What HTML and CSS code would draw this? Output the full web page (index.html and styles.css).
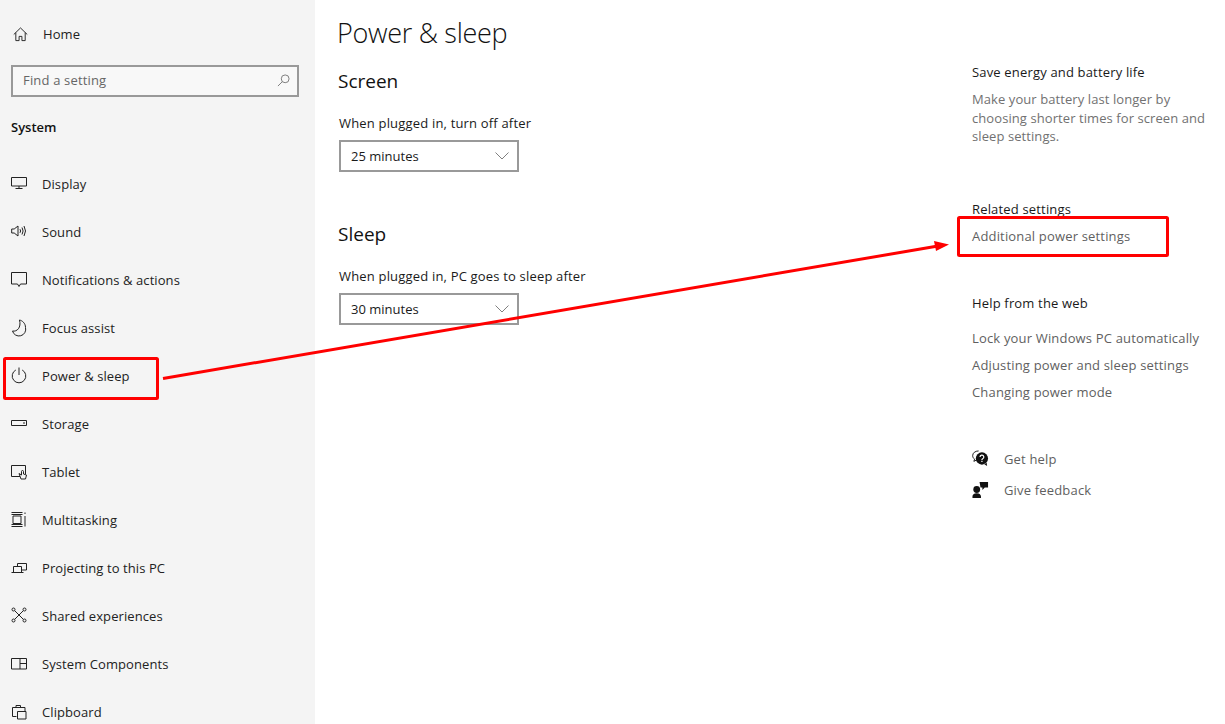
FILE: index.html
```html
<!DOCTYPE html>
<html>
<head>
<meta charset="utf-8">
<title>Power &amp; sleep</title>
<link rel="stylesheet" href="styles.css">
</head>
<body>

<div class="page">
	<nav class="sidebar">
		<div class="nav-item home">
			<svg class="icon" viewBox="0 0 16 16"><path d="M.8 8 8 1l7.2 7M3 6v8.500h3.500V10h3v4.500H13V6"/></svg>
			<span>Home</span>
		</div>
		<div class="search">
			<span>Find a setting</span>
			<svg class="search-icon" viewBox="0 0 14 14"><circle cx="8.800" cy="5.200" r="4.200"/><path d="M5.800 8.200 1 13"/></svg>
		</div>
		<div class="system">System</div>
		<ul class="nav-list">
			<li class="nav-item">
				<svg class="icon" viewBox="0 0 16 16"><path d="M.5 1.500h15v8.500H.5zM8 10v2.500M4.500 12.500h7"/></svg>
				<span>Display</span>
			</li>
			<li class="nav-item">
				<svg class="icon" viewBox="0 0 16 16"><path d="M.7 5v4h2.500L7 12V2L3.200 5zM9 5.200q1.200 1.800 0 3.600M11 3.500q2.200 3.500 0 7M13 2q3 5 0 10"/></svg>
				<span>Sound</span>
			</li>
			<li class="nav-item">
				<svg class="icon" viewBox="0 0 16 16"><path d="M.5.500h15v11.500H9.500L8 14.500 6.500 12h-6z"/></svg>
				<span>Notifications &amp; actions</span>
			</li>
			<li class="nav-item">
				<svg class="icon" viewBox="0 0 16 16"><path d="M8.500 0C11 .5 14.500 3 14.500 7.500a6.500 6.500 0 0 1-13 3.500C6 12 10.500 7.500 8.500 0z"/></svg>
				<span>Focus assist</span>
			</li>
			<li class="nav-item">
				<svg class="icon" viewBox="0 0 16 16"><path d="M4.800 2a6.800 6.800 0 1 0 6.400 0M8-.5V7"/></svg>
				<span>Power &amp; sleep</span>
			</li>
			<li class="nav-item">
				<svg class="icon" viewBox="0 0 16 16"><path d="M.5 4.500h15v5H.5zM12 7h2"/></svg>
				<span>Storage</span>
			</li>
			<li class="nav-item">
				<svg class="icon" viewBox="0 0 16 16"><path d="M9 12.500H.5v-11h14V10M8 9.500 10 15h4.500l1-4-3-1V7.500a1 1 0 0 0-2 0V11z"/></svg>
				<span>Tablet</span>
			</li>
			<li class="nav-item">
				<svg class="icon" viewBox="0 0 16 16"><path d="M.5.500h11M.5 14.500h11M2 4h8v7.500H2zM.5 2.500h11M.5 12.500h11M14 .5v1.500M14 4v10.500"/></svg>
				<span>Multitasking</span>
			</li>
			<li class="nav-item">
				<svg class="icon" viewBox="0 0 16 16"><path d="M6.500 6V3.500h9V10h-5M2.500 6.500h8v6h-8zM.5 12.500h12"/></svg>
				<span>Projecting to this PC</span>
			</li>
			<li class="nav-item">
				<svg class="icon" viewBox="0 0 16 16"><circle cx="2.500" cy="1.500" r="1.500"/><circle cx="13.500" cy="1.500" r="1.500"/><circle cx="2.500" cy="12.500" r="1.500"/><circle cx="13.500" cy="12.500" r="1.500"/><path d="M3.800 2.800 12.200 11.200M12.200 2.800 3.800 11.200"/></svg>
				<span>Shared experiences</span>
			</li>
			<li class="nav-item">
				<svg class="icon" viewBox="0 0 16 16"><path d="M.5 2.500h15V13H.5zM9 2.500V13M9 7.500h6.500"/></svg>
				<span>System Components</span>
			</li>
			<li class="nav-item">
				<svg class="icon" viewBox="0 0 16 16"><path d="M5.500 12.500h-4v-9H14V7M5 3.500v-2h4.500v2M6.500 7.500H15V15H6.500z"/></svg>
				<span>Clipboard</span>
			</li>
		</ul>
	</nav>

	<main class="content">
		<h1>Power &amp; sleep</h1>
		<h2>Screen</h2>
		<label>When plugged in, turn off after</label>
		<div class="select">
			<span>25 minutes</span>
			<svg viewBox="0 0 14 8"><path d="M.5.500 7 7 13.500.500"/></svg>
		</div>
		<h2 class="second">Sleep</h2>
		<label>When plugged in, PC goes to sleep after</label>
		<div class="select">
			<span>30 minutes</span>
			<svg viewBox="0 0 14 8"><path d="M.5.500 7 7 13.500.500"/></svg>
		</div>
	</main>

	<aside class="side">
		<h3>Save energy and battery life</h3>
		<p>Make your battery last longer by choosing shorter times for screen and sleep settings.</p>
		<h3 class="related">Related settings</h3>
		<a class="power-link">Additional power settings</a>
		<h3 class="web">Help from the web</h3>
		<a class="web-link">Lock your Windows PC automatically</a>
		<a class="web-link">Adjusting power and sleep settings</a>
		<a class="web-link">Changing power mode</a>
		<div class="help first">
			<svg viewBox="0 0 18 18"><path class="line" d="M7 1C3.500 1 .7 3 .7 6c0 1.500.8 2.800 2 3.700L2 12l3-1.500"/><circle cx="10.500" cy="9" r="6.500"/><path class="mark" d="M8.500 7.500a2 2 0 1 1 2.800 1.800c-.6.300-.8.700-.8 1.200M10.500 11.500v1.300"/><path d="M13 15l3 2-.5-3.500z"/></svg>
			<span>Get help</span>
		</div>
		<div class="help">
			<svg viewBox="0 0 18 18"><circle cx="5" cy="9" r="3.600"/><path d="M.5 18v-1.500c0-2 1.500-3.500 4.500-3.500s4.500 1.500 4.500 3.500V18zM8 1h9v6h-3.500L11 9.500V7H9z"/></svg>
			<span>Give feedback</span>
		</div>
	</aside>
</div>

<svg class="marks" viewBox="0 0 1225 724">
	<rect x="4.500" y="358.500" width="153" height="40" rx="1"/>
	<rect x="958.500" y="217.500" width="209" height="38" rx="1"/>
	<path d="M163 378.500 938 246"/>
	<polygon points="949,244.500 934,241 936,251"/>
</svg>

</body>
</html>
```

FILE: styles.css
```css
* {
	margin: 0;
	padding: 0;
	box-sizing: border-box;
}
html, body {
	height: 724px;
	overflow: hidden;
	background: #fff;
}
body {
	font-family: "Open Sans", "Liberation Sans", sans-serif;
	font-size: 13px;
	letter-spacing: .17px;
	color: #1a1a1a;
	position: relative;
}
.page {
	display: flex;
	height: 724px;
}

/* sidebar */
.sidebar {
	width: 315px;
	flex: none;
	height: 724px;
	overflow: hidden;
	padding-top: 10px;
	background: #f4f4f4;
}
.nav-list {
	list-style: none;
	margin-top: 23px;
}
.nav-item {
	display: flex;
	align-items: center;
	height: 48px;
	padding-left: 11px;
	letter-spacing: .08px;
	color: #222;
}
.nav-item .icon {
	width: 16px;
	height: 16px;
	margin-right: 15px;
	flex: none;
	overflow: visible;
}
.home .icon {
	margin: 0 15px 0 2px;
	width: 15px;
	height: 15px;
}
.icon, .search-icon {
	fill: none;
	stroke: #222;
	stroke-width: 1;
}
.search {
	display: flex;
	align-items: center;
	justify-content: space-between;
	width: 288px;
	height: 32px;
	margin: 7px 0 0 11px;
	padding: 0 7px 2px 10px;
	border: 2px solid #999;
	background: #f8f8f8;
	color: #666;
}
.search-icon {
	width: 13px;
	height: 13px;
	stroke: #777;
}
.system {
	height: 20px;
	line-height: 20px;
	margin: 20px 0 0 11px;
	font-weight: 600;
	letter-spacing: 0;
	color: #111;
}

/* main column */
.content {
	width: 657px;
	flex: none;
	padding: 14px 0 0 24px;
}
h1 {
	font-size: 27px;
	font-weight: 300;
	line-height: 38px;
	letter-spacing: -.3px;
	margin-left: -2px;
	color: #111;
}
h2 {
	font-size: 19px;
	font-weight: 400;
	line-height: 28px;
	letter-spacing: 0;
	margin: 15px 0 18px -1px;
	color: #111;
}
h2.second {
	margin-top: 48px;
}
label {
	display: block;
	line-height: 20px;
	letter-spacing: .18px;
	margin-bottom: 7px;
}
.select {
	display: flex;
	align-items: center;
	justify-content: space-between;
	width: 180px;
	height: 32px;
	padding: 0 8px 0 10px;
	border: 2px solid #999;
	letter-spacing: 0;
}
.select svg {
	width: 14px;
	height: 8px;
	fill: none;
	stroke: #808080;
	stroke-width: 1;
}

/* right column */
.side {
	width: 253px;
	flex: none;
	padding: 62px 15px 0 0;
}
h3 {
	font-size: 13px;
	font-weight: 400;
	line-height: 20px;
	color: #1a1a1a;
}
.side p {
	margin-top: 8px;
	line-height: 18.500px;
	letter-spacing: .08px;
	color: #717171;
}
h3.related {
	margin-top: 53px;
}
.power-link {
	display: block;
	margin-top: 7px;
	line-height: 20px;
	color: #5f5f5f;
}
h3.web {
	margin-top: 47px;
}
.web-link {
	display: block;
	line-height: 20px;
	margin-bottom: 7px;
	color: #5f5f5f;
}
h3.web + .web-link {
	margin-top: 15px;
}
.help {
	display: flex;
	align-items: center;
	height: 20px;
	margin-top: 11px;
	color: #5f5f5f;
}
.help.first {
	margin-top: 47px;
}
.help svg {
	width: 17px;
	height: 17px;
	margin-right: 15px;
	fill: #111;
}
.help .line {
	fill: none;
	stroke: #111;
}
.help .mark {
	fill: none;
	stroke: #fff;
	stroke-width: 1.300;
}

/* red annotations drawn over the screenshot */
.marks {
	position: absolute;
	left: 0;
	top: 0;
	width: 1225px;
	height: 724px;
	pointer-events: none;
	fill: none;
	stroke: #f00;
	stroke-width: 3;
}
.marks polygon {
	fill: #f00;
	stroke: none;
}
```
